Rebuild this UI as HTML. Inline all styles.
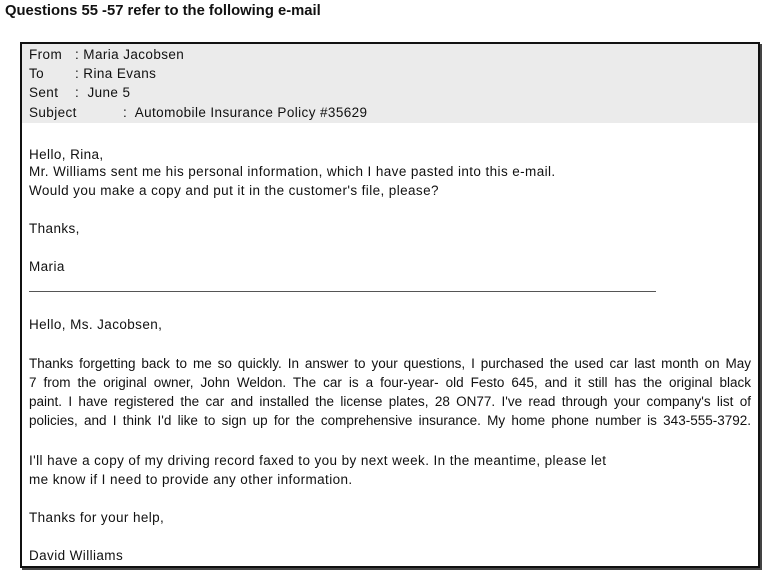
<!DOCTYPE html>
<html><head><style>
body{margin:0;width:771px;height:577px;background:#fff;font-family:"Liberation Sans",sans-serif;color:#111;position:relative;overflow:hidden}
.t{position:absolute;font-size:13.5px;letter-spacing:0.4px;white-space:nowrap;line-height:16px}
.j{text-align:justify;text-align-last:justify;width:722px;white-space:normal;letter-spacing:0}
#box{position:absolute;left:20px;top:42px;width:736px;height:522px;border:2px solid #111;box-shadow:2px 2px 0 #444}
#hdr{position:absolute;left:22px;top:44px;width:736px;height:79px;background:#ebebeb}
</style></head><body>
<div class="t" style="left:5px;top:3px;font-weight:bold;font-size:14.8px;letter-spacing:0">Questions 55 -57 refer to the following e-mail</div>
<div id="box"></div>
<div id="hdr"></div>
<div class="t" style="left:29px;top:47px">From</div><div class="t" style="left:75px;top:47px">: Maria Jacobsen</div>
<div class="t" style="left:29px;top:66px">To</div><div class="t" style="left:75px;top:66px">: Rina Evans</div>
<div class="t" style="left:29px;top:85px">Sent</div><div class="t" style="left:75px;top:85px">:&nbsp; June 5</div>
<div class="t" style="left:29px;top:105px">Subject</div><div class="t" style="left:123px;top:105px">:&nbsp; Automobile Insurance Policy #35629</div>
<div class="t" style="left:29px;top:147px">Hello, Rina,</div>
<div class="t" style="left:29px;top:164px">Mr. Williams sent me his personal information, which I have pasted into this e-mail.</div>
<div class="t" style="left:29px;top:183px">Would you make a copy and put it in the customer's file, please?</div>
<div class="t" style="left:29px;top:221px">Thanks,</div>
<div class="t" style="left:29px;top:259px">Maria</div>
<div style="position:absolute;left:29px;top:291px;width:627px;border-top:1px solid #555"></div>
<div class="t" style="left:29px;top:317px">Hello, Ms. Jacobsen,</div>
<div class="t j" style="left:29px;top:356px">Thanks forgetting back to me so quickly. In answer to your questions, I purchased the used car last month on May</div>
<div class="t j" style="left:29px;top:375px">7 from the original owner, John Weldon. The car is a four-year- old Festo 645, and it still has the original black</div>
<div class="t j" style="left:29px;top:394px">paint. I have registered the car and installed the license plates, 28 ON77. I've read through your company's list of</div>
<div class="t j" style="left:29px;top:413px">policies, and I think I'd like to sign up for the comprehensive insurance. My home phone number is 343-555-3792.</div>
<div class="t" style="left:29px;top:453px">I'll have a copy of my driving record faxed to you by next week. In the meantime, please let</div>
<div class="t" style="left:29px;top:472px">me know if I need to provide any other information.</div>
<div class="t" style="left:29px;top:510px">Thanks for your help,</div>
<div class="t" style="left:29px;top:548px">David Williams</div>
</body></html>
